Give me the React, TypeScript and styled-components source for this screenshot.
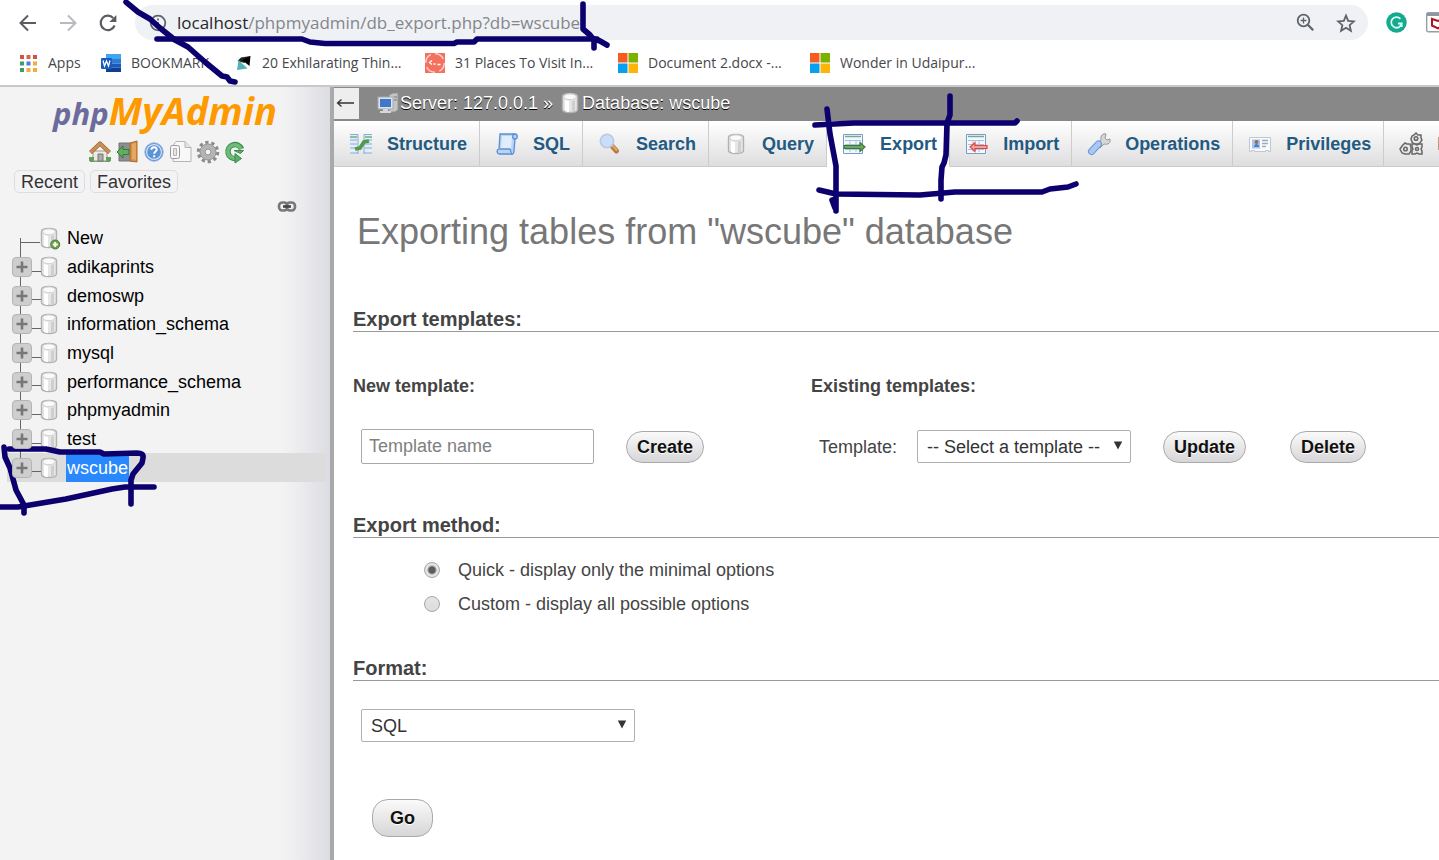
import React from "react";
import styled, { createGlobalStyle } from "styled-components";

const GlobalStyle = createGlobalStyle`
  *, *::before, *::after { box-sizing: border-box; }
  body {
    margin: 0;
    background: #fff;
    color: #444;
    font: 18px/20px "Liberation Sans", Arial, sans-serif;
    overflow-x: hidden;
  }
  button, input, select { font: inherit; color: inherit; }
  a { color: inherit; text-decoration: none; }
  svg { display: block; flex: none; }
`;

/* ---------- page frame ---------- */

const Page = styled.div`
  position: relative;
  display: flex;
  flex-direction: column;
  min-height: 100vh;
  overflow: hidden;
`;

const Chrome = styled.header`
  border-bottom: 2px solid #c9c9cb;
  color: #46474b;
  font: 14px/20px "Open Sans", "Noto Sans", sans-serif;
`;

const Toolbar = styled.div`
  display: flex;
  align-items: center;
  padding: 5px 0 0 18px;
`;

const NavButton = styled.button`
  width: 20px;
  height: 20px;
  margin-right: 20px;
  padding: 0;
  border: 0;
  background: none;
`;

const Omnibox = styled.div`
  flex: 1;
  display: flex;
  align-items: center;
  gap: 21px;
  height: 35px;
  margin-left: -3px;
  padding: 0 12px 0 14px;
  border-radius: 18px;
  background: #f0f1f5;
`;

const Address = styled.div`
  flex: 1;
  margin-left: -11px;
  color: #83868c;
  font-size: 17px;
  line-height: 24px;
  white-space: nowrap;

  b { font-weight: 400; color: #26272b; }
`;

const Extensions = styled.div`
  display: flex;
  align-items: center;
  flex: 0 0 53px;
  gap: 19px;
  margin-left: 18px;
  overflow: hidden;
`;

const Bookmarks = styled.nav`
  display: flex;
  align-items: center;
  height: 45px;
  padding-left: 18px;
`;

const Bookmark = styled.a<{ $width: number }>`
  display: flex;
  align-items: center;
  gap: 10px;
  width: ${(p) => p.$width}px;
  white-space: nowrap;
`;

const Body = styled.div`
  display: flex;
  flex: 1;
`;

/* ---------- navigation panel ---------- */

const Sidebar = styled.aside`
  flex: 0 0 334px;
  border-right: 4px solid #a9a9a9;
  background: linear-gradient(to right, #f3f3f3 280px, #ececee 300px, #dcdde2 330px);
  color: #000;
`;

const Logo = styled.a`
  display: flex;
  justify-content: center;
  align-items: baseline;
  height: 50px;
  font: italic 700 38px/46px "Open Sans", "Noto Sans", sans-serif;
  color: #f90;

  span { font-size: 31px; color: #6c6c9c; }
`;

const QuickLinks = styled.div`
  display: flex;
  gap: 3px;
  height: 30px;
  padding: 3px 0 0 88px;
`;

const RecentBar = styled.div`
  display: flex;
  gap: 5px;
  padding: 3px 0 0 14px;
`;

const RecentButton = styled.button`
  height: 23px;
  padding: 0 6px;
  border: 1px solid #ddd;
  border-radius: 5px;
  background: #f3f3f5;
  color: #333;
  line-height: 20px;
`;

const LinkToggle = styled.button`
  display: block;
  margin: 7px 0 11px 277px;
  padding: 0;
  border: 0;
  background: none;
`;

const Tree = styled.ul`
  display: grid;
  grid-auto-rows: 1fr;
  height: 258px;
  margin: 0;
  padding: 0 4px 0 7px;
  list-style: none;
`;

const TreeRow = styled.li<{ $active?: boolean; $first?: boolean }>`
  position: relative;
  display: flex;
  align-items: center;
  padding-left: 5px;
  background: ${(p) => (p.$active ? "#dcdcdc" : "transparent")};

  &::before {
    content: "";
    position: absolute;
    left: 13px;
    top: ${(p) => (p.$first ? "50%" : "0")};
    bottom: ${(p) => (p.$active ? "50%" : "0")};
    border-left: 1px solid #666;
  }

  &::after {
    content: "";
    position: absolute;
    left: ${(p) => (p.$first ? 13 : 25)}px;
    width: ${(p) => (p.$first ? 20 : 9)}px;
    top: 18px;
    border-top: 1px solid #666;
  }
`;

const Expander = styled.button`
  position: relative;
  z-index: 1;
  width: 20px;
  height: 20px;
  margin-right: 5px;
  padding: 3px;
  border: 1px solid #b4b4b4;
  border-radius: 4px;
  background: #cecece;
`;

const NoExpander = styled.span`
  width: 25px;
`;

const TreeLink = styled.a<{ $active?: boolean }>`
  margin-left: 5px;
  padding: 4px 1px;
  background: ${(p) => (p.$active ? "#2a88ff" : "transparent")};
  color: ${(p) => (p.$active ? "#fff" : "#000")};
`;

/* ---------- content ---------- */

const Content = styled.main`
  flex: 1;
  min-width: 0;
  overflow: hidden;
`;

const ServerBar = styled.div`
  display: flex;
  align-items: center;
  height: 34px;
  padding-bottom: 2px;
  background: #888;
  color: #fff;
  text-shadow: 0 1px 0 #000;
  white-space: nowrap;
`;

const CollapseButton = styled.button`
  width: 25px;
  height: 31px;
  margin-right: 17px;
  padding: 0 2px;
  border: 0;
  background: #eee;
`;

const Crumb = styled.a`
  display: flex;
  align-items: center;
`;

const Separator = styled.span`
  margin: 0 5px;
`;

const Tabs = styled.nav`
  display: flex;
  height: 46px;
`;

const Tab = styled.a<{ $active?: boolean }>`
  display: flex;
  flex: none;
  align-items: center;
  gap: 14px;
  padding: 0 12px 0 15px;
  border-right: 1px solid #ccc;
  border-bottom: 1px solid ${(p) => (p.$active ? "#fff" : "#ccc")};
  background: ${(p) => (p.$active ? "#fff" : "linear-gradient(#fff, #dedee0)")};
  color: #235a81;
  font-weight: 700;
`;

const Form = styled.form`
  padding: 44px 0 20px 19px;
`;

const Title = styled.h1`
  margin: 0;
  padding-left: 4px;
  color: #777;
  font-size: 36px;
  font-weight: 400;
  line-height: 42px;
`;

const SectionTitle = styled.h2<{ $before: number }>`
  margin: ${(p) => p.$before}px 0 0;
  border-bottom: 1px solid #999;
  font-size: 20px;
  line-height: 24px;
`;

const TemplateGrid = styled.div`
  display: grid;
  grid-template-columns: minmax(360px, 458fr) minmax(550px, 628fr);
  padding-top: 44px;
`;

const GroupTitle = styled.h3`
  margin: 0 0 33px;
  font-size: 18px;
  line-height: 20px;
`;

const FieldRow = styled.div`
  display: flex;
  align-items: center;
  gap: 32px;
  height: 35px;
  padding-left: 8px;
`;

const TextField = styled.input`
  width: 233px;
  height: 35px;
  padding: 0 7px;
  border: 1px solid #aaa;
  border-radius: 2px;
  background: #fff;

  &::placeholder { color: #808080; opacity: 1; }
`;

const FieldLabel = styled.label`
  margin-right: -12px;
`;

const SelectBox = styled.span<{ $width: number }>`
  position: relative;
  display: block;
  width: ${(p) => p.$width}px;

  svg {
    position: absolute;
    right: 8px;
    top: 11px;
    pointer-events: none;
  }
`;

const Select = styled.select`
  appearance: none;
  display: block;
  width: 100%;
  height: 33px;
  padding: 0 9px;
  border: 1px solid #b0b0b0;
  border-radius: 2px;
  background: #fff;
  color: #333;
`;

const PillButton = styled.button<{ $large?: boolean }>`
  height: ${(p) => (p.$large ? 38 : 32)}px;
  padding: 0 ${(p) => (p.$large ? 17 : 10)}px;
  border: 1px solid #aaa;
  border-radius: 16px;
  background: linear-gradient(#fafafa, #d6d6d8);
  color: #111;
  font-weight: 700;
  text-shadow: 0 1px 0 #fff;
`;

const ButtonPair = styled.div`
  display: flex;
  gap: 44px;
`;

const Choices = styled.div`
  padding: 15px 0 0 71px;
`;

const Choice = styled.label`
  display: flex;
  align-items: center;
  gap: 18px;
  height: 34px;
`;

const Radio = styled.input`
  appearance: none;
  width: 16px;
  height: 16px;
  margin: 0;
  border: 1px solid #a6a6a6;
  border-radius: 50%;
  background: linear-gradient(#e6e6e6, #dcdcdc);

  &:checked {
    background: radial-gradient(circle, #5c5c5c 3px, #e4e4e4 5px);
  }
`;

const FormatRow = styled.div`
  padding: 28px 0 57px 8px;
`;

const SubmitRow = styled.div`
  padding-left: 19px;
`;

const Ink = styled.svg`
  position: absolute;
  left: 0;
  top: 0;
  pointer-events: none;
`;

/* ---------- icons ---------- */

const BackIcon = ({ color }: { color: string }) => (
  <svg width="20" height="20" viewBox="0 0 20 20" fill="none" stroke={color} strokeWidth="2">
    <path d="M18 10H3M10 2.5 2.5 10l7.5 7.5" />
  </svg>
);

const ForwardIcon = () => (
  <svg width="20" height="20" viewBox="0 0 20 20" fill="none" stroke="#b9babd" strokeWidth="2">
    <path d="M2 10h15M10 2.5l7.5 7.5-7.5 7.5" />
  </svg>
);

const ReloadIcon = () => (
  <svg width="20" height="20" viewBox="0 0 20 20" fill="none" stroke="#5b5c60" strokeWidth="2.2">
    <path d="M16.6 12.5A7.2 7.2 0 1 1 15.2 5" />
    <path d="M18.4 2v7h-7z" fill="#5b5c60" stroke="none" />
  </svg>
);

const InfoIcon = () => (
  <svg width="18" height="18" viewBox="0 0 18 18" fill="none" stroke="#5f6368" strokeWidth="1.8">
    <circle cx="9" cy="9" r="7.3" />
    <path d="M9 8v5M9 4.6v2" />
  </svg>
);

const ZoomIcon = () => (
  <svg width="19" height="19" viewBox="0 0 19 19" fill="none" stroke="#5f6368" strokeWidth="1.8">
    <circle cx="7.5" cy="7.5" r="5.8" />
    <path d="m11.8 11.8 5.4 5.4" strokeWidth="2.3" />
    <path d="M7.5 4.6v5.8M4.6 7.5h5.8" strokeWidth="1.3" />
  </svg>
);

const StarIcon = () => (
  <svg width="20" height="20" viewBox="0 0 20 20" fill="none" stroke="#5f6368" strokeWidth="1.8">
    <path d="m10 2.6 2.2 5.3 5.7.5-4.3 3.8 1.3 5.6-4.9-3-4.9 3 1.3-5.6-4.3-3.8 5.7-.5z" />
  </svg>
);

const GrammarlyIcon = () => (
  <svg width="21" height="21" viewBox="0 0 21 21" fill="none">
    <circle cx="10.500" cy="10.500" r="10.2" fill="#15a98f" />
    <path d="M14.400 6.800a5.300 5.300 0 1 0 1.300 4.700h-3.700M15.700 11.500v3.600" stroke="#d9fff5" strokeWidth="1.8" />
  </svg>
);

const ShieldIcon = () => (
  <svg width="24" height="21" viewBox="0 0 24 21">
    <rect x=".7" y=".7" width="22" height="19" rx="1.500" fill="#fff" stroke="#9a9da6" strokeWidth="1.4" />
    <path d="M1 1h22v3H1z" fill="#8e97a6" />
    <path d="M6 7v6.500l6 2.800 6-2.800V7l-6 2z" fill="none" stroke="#b3121d" strokeWidth="2" />
  </svg>
);

const AppsIcon = () => {
  const colors = ["#d9503f", "#e0604c", "#d9503f", "#3f9b6c", "#4a7fd6", "#efae3e", "#3f9b6c", "#efae3e", "#efae3e"];
  return (
    <svg width="20" height="20" viewBox="0 0 20 20">
      {colors.map((c, i) => (
        <rect key={i} x={2 + (i % 3) * 6.5} y={2 + Math.floor(i / 3) * 6.5} width="4" height="4" fill={c} />
      ))}
    </svg>
  );
};

const WordIcon = () => (
  <svg width="20" height="20" viewBox="0 0 20 20">
    <path d="M5 1h15v5H5z" fill="#41a5ee" />
    <path d="M5 6h15v4.500H5z" fill="#2b7cd3" />
    <path d="M5 10.500h15v4H5z" fill="#185abd" />
    <path d="M5 14.500h15V19H5z" fill="#103f91" />
    <rect x="0" y="5" width="11" height="11" rx="1" fill="#185abd" />
    <path d="m2 7.500 1.500 5.500 2-5 2 5L9 7.500" fill="none" stroke="#fff" strokeWidth="1.300" />
  </svg>
);

const KiteIcon = () => (
  <svg width="16" height="18" viewBox="0 0 16 18">
    <path d="M14.500 2 5 3.500 1.500 7l7 2z" fill="#222" />
    <path d="M14.500 2 13.500 12 6 6z" fill="#000" />
    <path d="m2.500 6 9 8.500L1 16z" fill="#53b3b3" />
  </svg>
);

const BadgeIcon = () => (
  <svg width="20" height="20" viewBox="0 0 20 20">
    <path d="M0 0h20v20H0z" fill="#f4705f" />
    <circle cx="10" cy="10" r="9.300" fill="none" stroke="#fbd5cf" strokeWidth="1.400" strokeDasharray="10 4.600" />
    <path d="m7 7.500-2.500 2L7 11.500M8.500 11h2M12.500 11.500h3" fill="none" stroke="#fff" strokeWidth="1.300" />
  </svg>
);

const MicrosoftIcon = () => (
  <svg width="20" height="20" viewBox="0 0 20 20">
    <path d="M0 0h9.500v9.500H0z" fill="#f65c22" />
    <path d="M10.500 0H20v9.500h-9.500z" fill="#7eb000" />
    <path d="M0 10.500h9.500V20H0z" fill="#06a0ee" />
    <path d="M10.500 10.500H20V20h-9.500z" fill="#fdb50b" />
  </svg>
);

const HomeIcon = () => (
  <svg width="24" height="24" viewBox="0 0 24 24">
    <path d="M2 20h20v2H2z" fill="#62a05c" />
    <path d="M5 11h14v10H5z" fill="#eeeae2" stroke="#999" />
    <path d="M10 14h5v7h-5z" fill="#aaa" stroke="#777" />
    <path d="m2.500 12.500 9.500-9 9.500 9" fill="none" stroke="#a8692c" strokeWidth="4.200" strokeLinejoin="round" />
    <path d="m2.500 12.500 9.500-9 9.500 9" fill="none" stroke="#c9915a" strokeWidth="2.600" strokeLinejoin="round" />
    <path d="M1 17h5v4H1zM18 17h5v4h-5z" fill="#62a05c" />
  </svg>
);

const LogoutIcon = () => (
  <svg width="24" height="24" viewBox="0 0 24 24">
    <path d="M4 3h15v18H4z" fill="#8b8e90" stroke="#707376" />
    <path d="m15 3 7-2v21l-7-1z" fill="#d98f46" stroke="#a8692c" />
    <path d="m17 4 4-1v17l-4-1z" fill="#e5a860" />
    <path d="m2 12 6-6v3.500h6v5H8V18z" fill="#5fae5c" stroke="#347b38" />
  </svg>
);

const HelpIcon = () => (
  <svg width="24" height="24" viewBox="0 0 24 24" fill="none">
    <circle cx="12" cy="12" r="9.200" fill="#5c92d6" stroke="#8fb1dd" />
    <circle cx="12" cy="12" r="7.400" stroke="#cfe1f7" strokeWidth="1.200" />
    <path d="M9.300 9.800c.2-3.600 5.600-3.400 5.400-.2-.1 1.800-2.500 2-2.500 4.200M12.200 15.200v2" stroke="#fff" strokeWidth="2" />
  </svg>
);

const DocsIcon = () => (
  <svg width="24" height="24" viewBox="0 0 24 24" fill="#f8f8f8" stroke="#b5b5b5">
    <path d="M7 1.500h9l6 6v14H4v-16z" />
    <path d="M16 1.500v6h6" fill="#e2e2e2" />
    <rect x="1.500" y="5.500" width="9" height="13" rx="2" stroke="#999" />
    <path d="M4.500 8.500h3v7h-3z" fill="#e5e5e5" />
  </svg>
);

const GearIcon = () => (
  <svg width="24" height="24" viewBox="0 0 24 24" fill="none">
    <circle cx="12" cy="12" r="9.500" stroke="#8c8c8c" strokeWidth="3.500" strokeDasharray="3.200 2.770" />
    <circle cx="12" cy="12" r="5.800" stroke="#b4b4b4" strokeWidth="5" />
    <circle cx="12" cy="12" r="8" stroke="#999" />
    <circle cx="12" cy="12" r="3" stroke="#8c8c8c" />
  </svg>
);

const RefreshIcon = () => (
  <svg width="24" height="24" viewBox="0 0 24 24" fill="none">
    <path d="M18.500 9A7 7 0 1 0 13 18.500" stroke="#3b8b4f" strokeWidth="5.500" />
    <path d="M18 9A6.800 6.800 0 1 0 13 18.200" stroke="#6cbd76" strokeWidth="3.500" />
    <path d="M11 10.500h9.500l-3 3z" fill="#5aae68" stroke="#3b8b4f" />
    <path d="m12 13.500 6.500 5-6.500 4.500z" fill="#5aae68" stroke="#3b8b4f" />
  </svg>
);

const ChainIcon = () => (
  <svg width="20" height="13" viewBox="0 0 20 13" fill="none" stroke="#777" strokeWidth="2.600">
    <rect x="2" y="2.500" width="8.500" height="8" rx="3.500" />
    <rect x="9.500" y="2.500" width="8.500" height="8" rx="3.500" />
    <path d="M6 6.500h8" stroke="#444" />
  </svg>
);

const DatabaseIcon = ({ plus }: { plus?: boolean }) => (
  <svg width="24" height="24" viewBox="0 0 24 24">
    <path d="M4.500 5.500c0-4 15-4 15 0v13c0 4-15 4-15 0z" fill="#e6e6e6" stroke="#b2b2b2" strokeWidth="1.400" />
    <path d="M7 9v11c2 1 3 1 4 1V10z" fill="#fff" />
    <path d="M14 10v11l3-1V9z" fill="#cfcfcf" />
    <ellipse cx="12" cy="5.800" rx="6.300" ry="2.900" fill="#fafafa" stroke="#d2d2d2" />
    {plus && (
      <>
        <circle cx="18.200" cy="18.500" r="4.500" fill="#6fa04c" stroke="#4b7a33" />
        <path d="M18.200 16v5M15.700 18.500h5" stroke="#fff" strokeWidth="1.800" />
      </>
    )}
  </svg>
);

const PlusIcon = () => (
  <svg width="12" height="12" viewBox="0 0 12 12" stroke="#777" strokeWidth="2.600">
    <path d="M6 .5v11M.5 6h11" />
  </svg>
);

const ServerIcon = () => (
  <svg width="24" height="24" viewBox="0 0 24 24">
    <path d="m13 4 4-2h5v17l-3 2h-6z" fill="#c4c6c4" stroke="#8f9290" />
    <path d="M18 6h3M18 9h3" stroke="#777" />
    <rect x="2" y="6" width="15" height="12" fill="#dce3ec" stroke="#a4a9b0" />
    <rect x="4" y="8" width="11" height="8" fill="#3f78c9" />
    <path d="M7 18h5v2h3v2H4v-2h3z" fill="#d4d6d8" />
  </svg>
);

const ArrowLeftIcon = () => (
  <svg width="19" height="12" viewBox="0 0 19 12" fill="none" stroke="#333" strokeWidth="1.300">
    <path d="M1.500 6H18M5.500 2.500 1.500 6l4 3.500" />
  </svg>
);

const StructureIcon = () => (
  <svg width="24" height="24" viewBox="0 0 24 24">
    <path d="M1 2h8v20H1zM15 2h8v20h-8z" fill="#e3eef9" />
    <path d="M1 2.500h8V22M23 2.500h-8V22M1 8h7M1 12h7M1 16h7M1 21h8M16 8h7M16 12h7M16 16h7M15 21h8" stroke="#86aad0" fill="none" />
    <path d="M1 5h7M16 5h7" stroke="#6db37b" strokeWidth="1.500" />
    <path d="m6 17 5-1 4-6 5-1" fill="none" stroke="#4f9a4d" strokeWidth="3.800" />
  </svg>
);

const ScrollIcon = () => (
  <svg width="24" height="24" viewBox="0 0 24 24">
    <path d="M5 2h15c3 0 3 5 0 5l-1 12c0 3-2 4-4 3H4c-3-1-2-5 0-5z" fill="#b9d4f6" stroke="#5c8ed0" strokeWidth="1.300" />
    <path d="M7 4h10l-1 13H6z" fill="#e0edfd" />
    <path d="M20 2c-3 0-3 5 0 5M5 17h10c1 0 0 4 2 5" fill="none" stroke="#5c8ed0" strokeWidth="1.300" />
  </svg>
);

const SearchIcon = () => (
  <svg width="24" height="24" viewBox="0 0 24 24">
    <path d="m14 14 4.500 5" stroke="#b9793c" strokeWidth="5" strokeLinecap="round" />
    <path d="m15 14 3.500 4" stroke="#e2aa6a" strokeWidth="2" strokeLinecap="round" />
    <circle cx="9" cy="9" r="6.600" fill="#c9def8" stroke="#bccbe2" strokeWidth="1.800" />
  </svg>
);

const SheetIcon = ({ color, into }: { color: string; into?: boolean }) => (
  <svg width="24" height="24" viewBox="0 0 24 24">
    <path d="M1.500 2.500h19v19h-19z" fill="#f3f8fe" stroke="#7a9cc9" />
    <path d="M3 4.500h16" stroke="#79aa86" strokeWidth="1.500" />
    <path d="M3 8.500h16M3 12.500h16M3 17.500h16M8 8v12M14 8v12" stroke="#a9c0df" />
    {into ? (
      <path d="m5 15 5-4.500v3h12v3H10v3z" fill="#f3a09a" stroke={color} strokeWidth="1.200" />
    ) : (
      <path d="m23 15-5-4.500v3H2v3h16v3z" fill="#6aa862" stroke={color} strokeWidth="1.200" />
    )}
  </svg>
);

const WrenchIcon = () => (
  <svg width="24" height="24" viewBox="0 0 24 24">
    <path d="m10 13 4-5c-1-4 2-7 5-6l-1 4 2 2 3-1c1 4-2 6-6 5l-4 4z" fill="#d7d7d7" stroke="#979797" />
    <path d="m4.500 19.500 7-7.500" stroke="#6d97d6" strokeWidth="7" strokeLinecap="round" />
    <path d="m4.500 19.500 7-7.500" stroke="#a9c8f5" strokeWidth="5" strokeLinecap="round" />
  </svg>
);

const CardIcon = () => (
  <svg width="24" height="24" viewBox="0 0 24 24">
    <path d="M1.500 5.500h21v14h-2v-1h-3v1h-11v-1h-3v1h-2z" fill="#f8fafc" stroke="#c1c7ce" />
    <path d="M4 7.500h8v9H4z" fill="#a8c5ee" />
    <path d="M6 15c0-4 5-4 5 0z" fill="#4e7fc2" />
    <circle cx="8.500" cy="10" r="2" fill="#94705a" />
    <path d="M14 8.500h6M14 11.500h6M14 14.500h4" stroke="#98aac4" strokeWidth="1.300" />
  </svg>
);

const RoutinesIcon = () => (
  <svg width="24" height="24" viewBox="0 0 24 24" fill="#e8e8e8" stroke="#686868" strokeWidth="1.500">
    <path d="m17 1 2 2h3v3l1 2-2 3-2 1h-4l-2-2-1-3 1-3 2-1z" />
    <path d="m6 11 2 1h3l1 3v4l-2 3H6l-3-1-2-4 2-3z" />
    <path d="M13 12h3l2 1 2-1h3v3l-1 2 1 2v3h-3l-2-1-2 1h-3v-3l1-2-1-2z" />
    <circle cx="17" cy="6.500" r="1.800" />
    <circle cx="6.500" cy="17" r="1.800" />
    <circle cx="18" cy="17" r="1.500" />
  </svg>
);

const DropArrow = () => (
  <svg width="10" height="9" viewBox="0 0 10 9">
    <path d="M.8.5h8.400L5 8.500z" fill="#333" />
  </svg>
);

/* ---------- data ---------- */

const bookmarks = [
  { label: "Apps", icon: <AppsIcon />, width: 83 },
  { label: "BOOKMARK", icon: <WordIcon />, width: 135 },
  { label: "20 Exhilarating Thin...", icon: <KiteIcon />, width: 189 },
  { label: "31 Places To Visit In...", icon: <BadgeIcon />, width: 193 },
  { label: "Document 2.docx -...", icon: <MicrosoftIcon />, width: 192 },
  { label: "Wonder in Udaipur...", icon: <MicrosoftIcon />, width: 190 },
];

const databases = [
  "adikaprints",
  "demoswp",
  "information_schema",
  "mysql",
  "performance_schema",
  "phpmyadmin",
  "test",
  "wscube",
];

const tabs = [
  { label: "Structure", icon: <StructureIcon /> },
  { label: "SQL", icon: <ScrollIcon /> },
  { label: "Search", icon: <SearchIcon /> },
  { label: "Query", icon: <DatabaseIcon /> },
  { label: "Export", icon: <SheetIcon color="#3c7a3c" />, active: true },
  { label: "Import", icon: <SheetIcon color="#e0463e" into /> },
  { label: "Operations", icon: <WrenchIcon /> },
  { label: "Privileges", icon: <CardIcon /> },
  { label: "Routines", icon: <RoutinesIcon /> },
];

const quickLinks = [
  { label: "Home", icon: <HomeIcon /> },
  { label: "Log out", icon: <LogoutIcon /> },
  { label: "Help", icon: <HelpIcon /> },
  { label: "Documentation", icon: <DocsIcon /> },
  { label: "Settings", icon: <GearIcon /> },
  { label: "Reload", icon: <RefreshIcon /> },
];

const penStrokes = [
  "M126 2 138 12 150 19 160 28 175 40 188 47 205 62 222 76 227 77 230 81 235 82",
  "M157 39H302L310 42 325 43.500H454L457 42H474L477 39H597",
  "M583 4V29L590 35 594 40V48M594 39 600 41 607 45",
  "M9 449H46L60 452H100L104 454 137 453Q144 453 143 458L142 463 133 474 131 480V504",
  "M4 447 5 457 10 468 16 490 24 505V513",
  "M0 507H18L30 505 66 499 112 489 125 487H154",
  "M815 125 854 123H1015L1017 121",
  "M827 109 830 134 836 166V211M832 200 835 208",
  "M950 96V115L947 123 946 155 944 163 942 167 941 180V199",
  "M819 190 836 194 920 195 955 192H1042L1050 189 1068 187 1076 184",
];

export default function App() {
  return (
    <Page>
      <GlobalStyle />
      <Chrome>
        <Toolbar>
          <NavButton aria-label="Back"><BackIcon color="#5b5c60" /></NavButton>
          <NavButton aria-label="Forward"><ForwardIcon /></NavButton>
          <NavButton aria-label="Reload page"><ReloadIcon /></NavButton>
          <Omnibox>
            <InfoIcon />
            <Address><b>localhost</b>/phpmyadmin/db_export.php?db=wscube</Address>
            <ZoomIcon />
            <StarIcon />
          </Omnibox>
          <Extensions>
            <GrammarlyIcon />
            <ShieldIcon />
          </Extensions>
        </Toolbar>
        <Bookmarks>
          {bookmarks.map((b) => (
            <Bookmark key={b.label} href="#" $width={b.width}>
              {b.icon}
              {b.label}
            </Bookmark>
          ))}
        </Bookmarks>
      </Chrome>

      <Body>
        <Sidebar>
          <Logo href="#"><span>php</span>MyAdmin</Logo>
          <QuickLinks>
            {quickLinks.map((q) => (
              <a key={q.label} href="#" aria-label={q.label}>{q.icon}</a>
            ))}
          </QuickLinks>
          <RecentBar>
            <RecentButton>Recent</RecentButton>
            <RecentButton>Favorites</RecentButton>
          </RecentBar>
          <LinkToggle aria-label="Link with main panel"><ChainIcon /></LinkToggle>
          <Tree>
            <TreeRow $first>
              <NoExpander />
              <DatabaseIcon plus />
              <TreeLink href="#">New</TreeLink>
            </TreeRow>
            {databases.map((name) => (
              <TreeRow key={name} $active={name === "wscube"}>
                <Expander aria-label={`Expand ${name}`}><PlusIcon /></Expander>
                <DatabaseIcon />
                <TreeLink href="#" $active={name === "wscube"}>{name}</TreeLink>
              </TreeRow>
            ))}
          </Tree>
        </Sidebar>

        <Content>
          <ServerBar>
            <CollapseButton aria-label="Hide panel"><ArrowLeftIcon /></CollapseButton>
            <Crumb href="#"><ServerIcon />Server: 127.0.0.1</Crumb>
            <Separator>»</Separator>
            <Crumb href="#"><DatabaseIcon />Database: wscube</Crumb>
          </ServerBar>
          <Tabs>
            {tabs.map((t) => (
              <Tab key={t.label} href="#" $active={t.active}>
                {t.icon}
                {t.label}
              </Tab>
            ))}
          </Tabs>

          <Form onSubmit={(e) => e.preventDefault()}>
            <Title>Exporting tables from "wscube" database</Title>

            <SectionTitle $before={54}>Export templates:</SectionTitle>
            <TemplateGrid>
              <div>
                <GroupTitle>New template:</GroupTitle>
                <FieldRow>
                  <TextField type="text" placeholder="Template name" aria-label="Template name" />
                  <PillButton type="button">Create</PillButton>
                </FieldRow>
              </div>
              <div>
                <GroupTitle>Existing templates:</GroupTitle>
                <FieldRow>
                  <FieldLabel htmlFor="template">Template:</FieldLabel>
                  <SelectBox $width={214}>
                    <Select id="template"><option>-- Select a template --</option></Select>
                    <DropArrow />
                  </SelectBox>
                  <ButtonPair>
                    <PillButton type="button">Update</PillButton>
                    <PillButton type="button">Delete</PillButton>
                  </ButtonPair>
                </FieldRow>
              </div>
            </TemplateGrid>

            <SectionTitle $before={49}>Export method:</SectionTitle>
            <Choices>
              <Choice>
                <Radio type="radio" name="method" defaultChecked />
                Quick - display only the minimal options
              </Choice>
              <Choice>
                <Radio type="radio" name="method" />
                Custom - display all possible options
              </Choice>
            </Choices>

            <SectionTitle $before={35}>Format:</SectionTitle>
            <FormatRow>
              <SelectBox $width={274}>
                <Select aria-label="Format"><option>SQL</option></Select>
                <DropArrow />
              </SelectBox>
            </FormatRow>
            <SubmitRow>
              <PillButton type="submit" $large>Go</PillButton>
            </SubmitRow>
          </Form>
        </Content>
      </Body>

      <Ink width="1100" height="530" fill="none" stroke="#0b006e" strokeWidth="5.600" strokeLinecap="round" strokeLinejoin="round">
        {penStrokes.map((d) => (
          <path key={d} d={d} />
        ))}
      </Ink>
    </Page>
  );
}
